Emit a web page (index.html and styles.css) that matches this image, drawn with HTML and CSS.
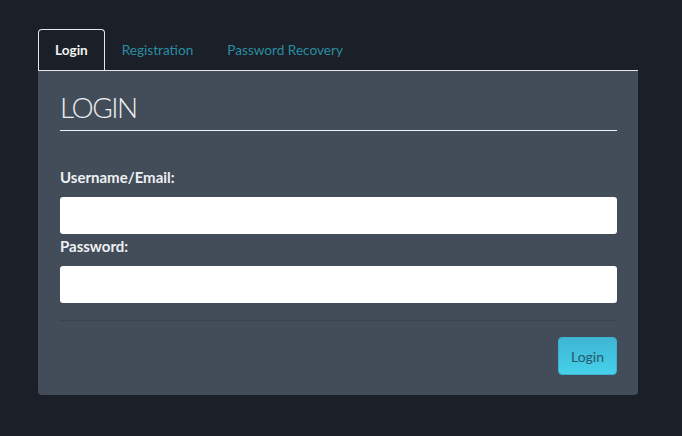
FILE: index.html
```html
<!DOCTYPE html>
<html lang="en">
<head>
  <meta charset="UTF-8">
  <title>Login</title>
  <link rel="stylesheet" href="styles.css">
</head>
<body>
  <div class="wrapper">
    <ul class="tabs">
      <li class="tab active">Login</li>
      <li class="tab">Registration</li>
      <li class="tab">Password Recovery</li>
    </ul>
    <div class="panel">
      <h1>LOGIN</h1>
      <form class="login-form">
        <label for="user">Username/Email:</label>
        <input type="text" id="user">
        <label for="pass">Password:</label>
        <input type="password" id="pass">
        <div class="actions">
          <button type="submit">Login</button>
        </div>
      </form>
    </div>
  </div>
</body>
</html>
```

FILE: styles.css
```css
/* Page */
body {
  margin: 0;
  background-color: #1b1f27;
  font-family: 'Lato', sans-serif;
  color: #fff;
}

.wrapper {
  width: 600px;
  margin: 29px 0 0 38px;
}

/* Tabs */
.tabs {
  list-style: none;
  margin: 0;
  padding: 0;
  display: flex;
  border-bottom: 1px solid #e6e6e6;
}

.tab {
  height: 40px;
  line-height: 40px;
  padding: 0 16px;
  font-size: 13.6px;
  color: #2a8ea2;
  border: 1px solid transparent;
  border-bottom: none;
  border-radius: 4px 4px 0 0;
}

.tab.active {
  color: #f2f2f2;
  font-weight: bold;
  border-color: #e6e6e6;
  background-color: #1b1f27;
}

/* Panel */
.panel {
  background-color: #434d59;
  padding: 20px 21px 20px 22px;
  border-radius: 0 0 4px 4px;
}

h1 {
  margin: 0;
  padding: 0 0 7px;
  font-size: 28px;
  line-height: 32px;
  font-weight: 300;
  letter-spacing: -1.5px;
  color: #eef0f2;
  border-bottom: 1px solid #f2f2f2;
}

.login-form {
  display: flex;
  flex-direction: column;
  margin-top: 37px;
}

label {
  font-size: 15px;
  line-height: 18px;
  font-weight: bold;
  color: #eef0f2;
  margin-bottom: 11px;
}

input {
  height: 37px;
  border: none;
  border-radius: 3px;
  background-color: #fff;
  margin-bottom: 3px;
  box-sizing: border-box;
}

.actions {
  margin-top: 14px;
  border-top: 1px solid #3a434e;
  padding-top: 16px;
  display: flex;
  justify-content: flex-end;
}

button {
  height: 38px;
  padding: 0 12px;
  border: 1px solid #3cb4d0;
  border-radius: 4px;
  background: linear-gradient(#3db6d4, #46d0ea);
  color: #27566a;
  font-family: inherit;
  font-size: 14px;
  cursor: pointer;
}
```
